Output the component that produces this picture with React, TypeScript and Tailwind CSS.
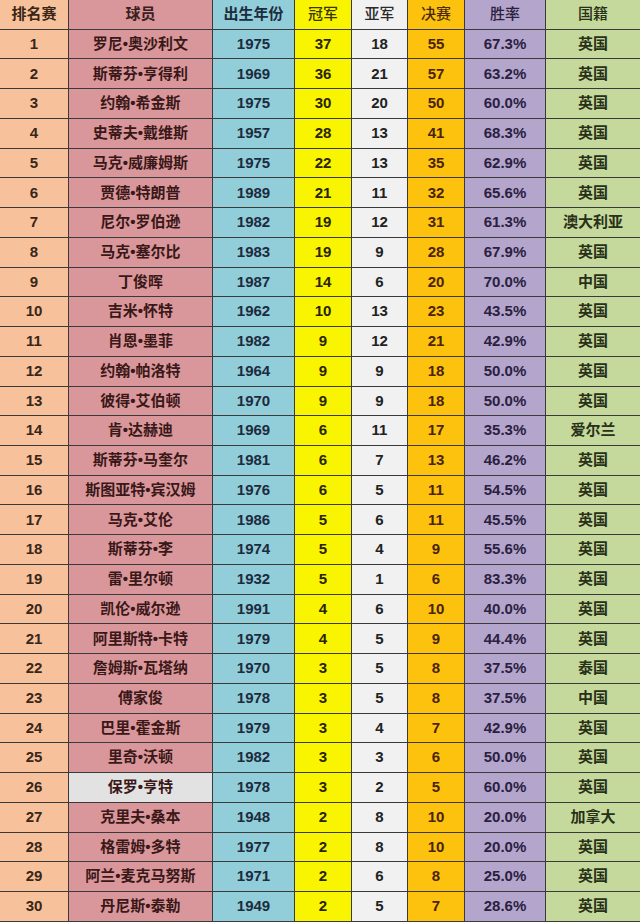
const rows: [number, string, number, number, number, number, string, string][] = [
  [1, "罗尼•奥沙利文", 1975, 37, 18, 55, "67.3%", "英国"],
  [2, "斯蒂芬•亨得利", 1969, 36, 21, 57, "63.2%", "英国"],
  [3, "约翰•希金斯", 1975, 30, 20, 50, "60.0%", "英国"],
  [4, "史蒂夫•戴维斯", 1957, 28, 13, 41, "68.3%", "英国"],
  [5, "马克•威廉姆斯", 1975, 22, 13, 35, "62.9%", "英国"],
  [6, "贾德•特朗普", 1989, 21, 11, 32, "65.6%", "英国"],
  [7, "尼尔•罗伯逊", 1982, 19, 12, 31, "61.3%", "澳大利亚"],
  [8, "马克•塞尔比", 1983, 19, 9, 28, "67.9%", "英国"],
  [9, "丁俊晖", 1987, 14, 6, 20, "70.0%", "中国"],
  [10, "吉米•怀特", 1962, 10, 13, 23, "43.5%", "英国"],
  [11, "肖恩•墨菲", 1982, 9, 12, 21, "42.9%", "英国"],
  [12, "约翰•帕洛特", 1964, 9, 9, 18, "50.0%", "英国"],
  [13, "彼得•艾伯顿", 1970, 9, 9, 18, "50.0%", "英国"],
  [14, "肯•达赫迪", 1969, 6, 11, 17, "35.3%", "爱尔兰"],
  [15, "斯蒂芬•马奎尔", 1981, 6, 7, 13, "46.2%", "英国"],
  [16, "斯图亚特•宾汉姆", 1976, 6, 5, 11, "54.5%", "英国"],
  [17, "马克•艾伦", 1986, 5, 6, 11, "45.5%", "英国"],
  [18, "斯蒂芬•李", 1974, 5, 4, 9, "55.6%", "英国"],
  [19, "雷•里尔顿", 1932, 5, 1, 6, "83.3%", "英国"],
  [20, "凯伦•威尔逊", 1991, 4, 6, 10, "40.0%", "英国"],
  [21, "阿里斯特•卡特", 1979, 4, 5, 9, "44.4%", "英国"],
  [22, "詹姆斯•瓦塔纳", 1970, 3, 5, 8, "37.5%", "泰国"],
  [23, "傅家俊", 1978, 3, 5, 8, "37.5%", "中国"],
  [24, "巴里•霍金斯", 1979, 3, 4, 7, "42.9%", "英国"],
  [25, "里奇•沃顿", 1982, 3, 3, 6, "50.0%", "英国"],
  [26, "保罗•亨特", 1978, 3, 2, 5, "60.0%", "英国"],
  [27, "克里夫•桑本", 1948, 2, 8, 10, "20.0%", "加拿大"],
  [28, "格雷姆•多特", 1977, 2, 8, 10, "20.0%", "英国"],
  [29, "阿兰•麦克马努斯", 1971, 2, 6, 8, "25.0%", "英国"],
  [30, "丹尼斯•泰勒", 1949, 2, 5, 7, "28.6%", "英国"],
];

const cell = "flex items-center justify-center h-[29.74px] border-b border-[#3a3a3a]";

export default function App() {
  return (
    <div
      className="w-[640px] h-[922px] overflow-hidden bg-white"
      style={{ fontFamily: '"Liberation Sans", "Noto Sans CJK SC", sans-serif' }}
    >
      <div className="grid grid-cols-[69px_144px_82px_57px_56px_57px_81px_94px] text-[15px] font-bold">
        {/* Header */}
        <div className={`${cell} bg-[#f7c19c] text-[#3a2616] border-r`}>排名赛</div>
        <div className={`${cell} bg-[#d9979b] text-[#3a2020] font-semibold border-r`}>球员</div>
        <div className={`${cell} bg-[#92cdda] text-[#1c2c3c] border-r`}>出生年份</div>
        <div className={`${cell} bg-[#f9f400] text-[#3a3400] font-medium border-r`}>冠军</div>
        <div className={`${cell} bg-[#f1f1f1] text-[#2a2a2a] font-medium border-r`}>亚军</div>
        <div className={`${cell} bg-[#fdc20d] text-[#4a2a0a] font-medium border-r`}>决赛</div>
        <div className={`${cell} bg-[#b4a5cc] text-[#2a2040] font-medium border-r`}>胜率</div>
        <div className={`${cell} bg-[#c6d99c] text-[#283018] font-medium`}>国籍</div>

        {rows.map(([rank, name, year, win, runner, fin, rate, nation]) => (
          <div key={rank} className="contents">
            <div className={`${cell} bg-[#f7c19c] text-[#3a2616] border-r`}>{rank}</div>
            <div
              className={`${cell} ${rank === 26 ? "bg-[#e2e2e2]" : "bg-[#d9979b]"} text-[#3a1818] border-r`}
            >
              {name}
            </div>
            <div className={`${cell} bg-[#92cdda] text-[#1c2c3c] border-r`}>{year}</div>
            <div className={`${cell} bg-[#f9f400] text-[#2a2400] border-r`}>{win}</div>
            <div className={`${cell} bg-[#f1f1f1] text-[#222] border-r`}>{runner}</div>
            <div className={`${cell} bg-[#fdc20d] text-[#4a2408] border-r`}>{fin}</div>
            <div className={`${cell} bg-[#b4a5cc] text-[#2a2040] border-r`}>{rate}</div>
            <div className={`${cell} bg-[#c6d99c] text-[#283018]`}>{nation}</div>
          </div>
        ))}
      </div>
    </div>
  );
}
